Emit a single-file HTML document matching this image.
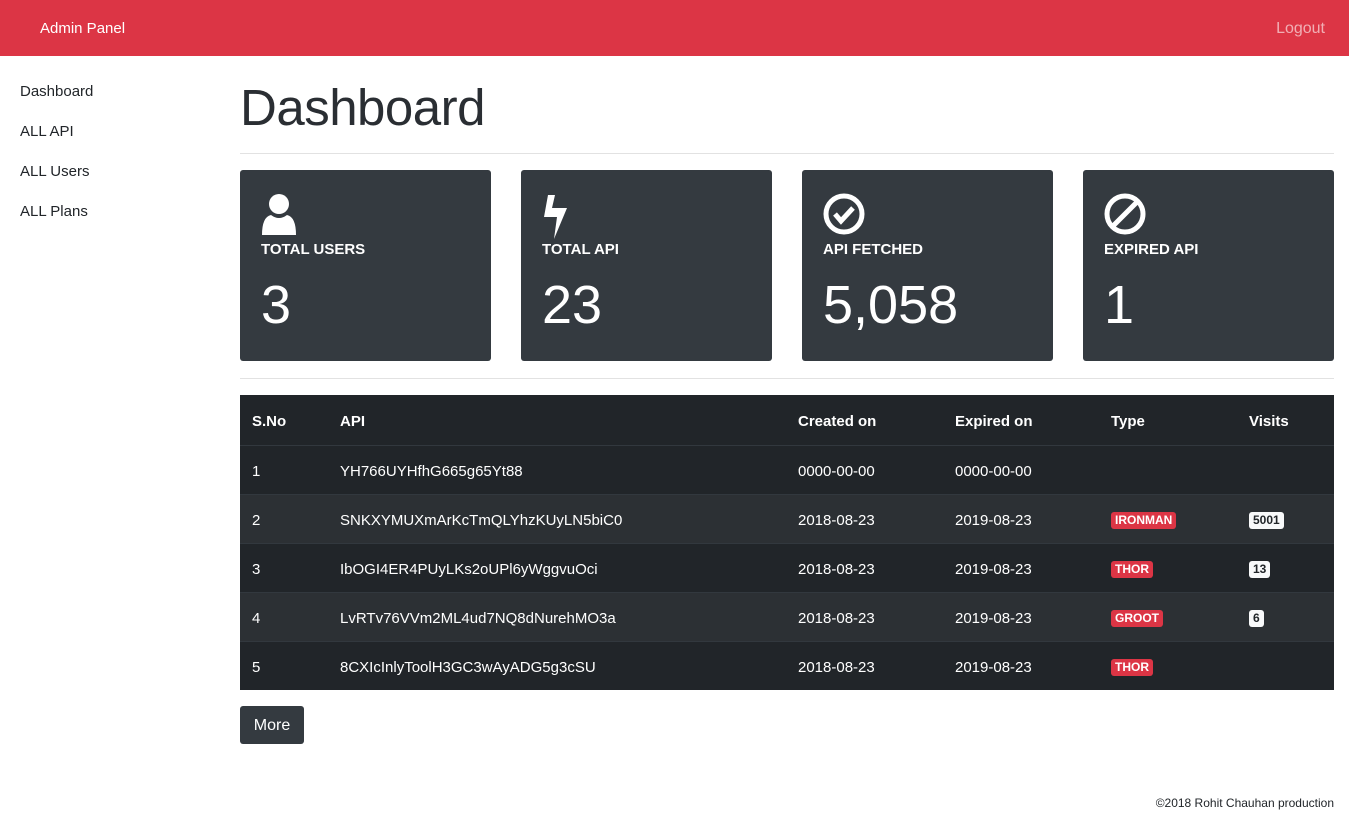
<!DOCTYPE html>
<html><head><meta charset="utf-8"><style>
*{box-sizing:border-box;margin:0;padding:0}
body{width:1349px;height:827px;font-family:"Liberation Sans",sans-serif;color:#212529;background:#fff;position:relative;overflow:hidden;font-size:16px}
.nav{height:56px;background:#dc3545;position:relative}
.nav .b{position:absolute;left:40px;top:20px;color:#fff;font-size:15px}
.nav .l{position:absolute;right:24px;top:20px;color:rgba(255,255,255,.6);font-size:16px}
.side a{position:absolute;left:20px;color:#212529;font-size:15px}
h1{position:absolute;left:240px;top:78px;font-size:51px;font-weight:normal;color:#2a2e33;letter-spacing:-0.5px}
.hr{position:absolute;left:240px;width:1094px;height:1px;background:#e2e2e2}
.card{position:absolute;top:170px;width:251px;height:191px;background:#343a40;border-radius:3px;color:#fff}
.card svg{position:absolute;left:21px;top:23px}
.card .tt{position:absolute;left:21px;top:71px;font-weight:bold;font-size:15px}
.card .n{position:absolute;left:21px;top:104px;font-size:54px;font-weight:normal}
table{position:absolute;left:240px;top:395px;width:1094px;border-collapse:collapse;background:#212529;color:#fff;font-size:15px}
td,th{height:49px;text-align:left;padding:3px 12px 0;border-top:1px solid #32383e}
th{height:50px;font-weight:bold;border-top:none;border-bottom:1px solid #32383e}
tr:nth-child(odd) td{background:#2c3034}
.bd{display:inline-block;font-size:12px;font-weight:bold;padding:2px 4px;border-radius:3px;background:#dc3545;color:#fff;line-height:13px}
.bl{background:#f8f9fa;color:#212529}
.more{position:absolute;left:240px;top:706px;width:64px;height:38px;background:#343a40;color:#fff;border-radius:3px;font-size:16px;text-align:center;line-height:40px}
.ft{position:absolute;right:15px;top:796px;font-size:12px;color:#212529}
</style></head><body>
<div class="nav"><span class="b">Admin Panel</span><span class="l">Logout</span></div>
<div class="side"><a style="top:83px">Dashboard</a><a style="top:123px">ALL API</a><a style="top:163px">ALL Users</a><a style="top:203px">ALL Plans</a></div>
<h1>Dashboard</h1>
<div class="hr" style="top:153px"></div>
<div class="card" style="left:240px"><svg width="36" height="44" viewBox="0 0 36 44"><circle cx="18" cy="11" r="10" fill="#fff"/><path d="M1 42 Q1 24 10 22 Q18 28 26 22 Q35 24 35 42 Z" fill="#fff"/></svg><div class="tt">TOTAL USERS</div><div class="n">3</div></div>
<div class="card" style="left:521px"><svg width="30" height="46" viewBox="0 0 30 46"><path d="M6 2 L13 2 L10 15 L25 15 L12 46 L15 24 L2 24 Z" fill="#fff"/></svg><div class="tt">TOTAL API</div><div class="n">23</div></div>
<div class="card" style="left:802px"><svg width="42" height="42" viewBox="0 0 42 42"><circle cx="21" cy="21" r="18" fill="none" stroke="#fff" stroke-width="5"/><path d="M12 21 L18 28 L30 15" fill="none" stroke="#fff" stroke-width="5"/></svg><div class="tt">API FETCHED</div><div class="n">5,058</div></div>
<div class="card" style="left:1083px"><svg width="42" height="42" viewBox="0 0 42 42"><circle cx="21" cy="21" r="18" fill="none" stroke="#fff" stroke-width="5"/><path d="M9 33 L33 9" stroke="#fff" stroke-width="5"/></svg><div class="tt">EXPIRED API</div><div class="n">1</div></div>
<div class="hr" style="top:378px"></div>
<table>
<colgroup><col style="width:88px"><col style="width:458px"><col style="width:157px"><col style="width:156px"><col style="width:138px"><col></colgroup>
<tr><th>S.No</th><th>API</th><th>Created on</th><th>Expired on</th><th>Type</th><th>Visits</th></tr>
<tr><td>1</td><td>YH766UYHfhG665g65Yt88</td><td>0000-00-00</td><td>0000-00-00</td><td></td><td></td></tr>
<tr><td>2</td><td>SNKXYMUXmArKcTmQLYhzKUyLN5biC0</td><td>2018-08-23</td><td>2019-08-23</td><td><span class="bd">IRONMAN</span></td><td><span class="bd bl">5001</span></td></tr>
<tr><td>3</td><td>IbOGI4ER4PUyLKs2oUPl6yWggvuOci</td><td>2018-08-23</td><td>2019-08-23</td><td><span class="bd">THOR</span></td><td><span class="bd bl">13</span></td></tr>
<tr><td>4</td><td>LvRTv76VVm2ML4ud7NQ8dNurehMO3a</td><td>2018-08-23</td><td>2019-08-23</td><td><span class="bd">GROOT</span></td><td><span class="bd bl">6</span></td></tr>
<tr><td>5</td><td>8CXIcInlyToolH3GC3wAyADG5g3cSU</td><td>2018-08-23</td><td>2019-08-23</td><td><span class="bd">THOR</span></td><td></td></tr>
</table>
<div class="more">More</div>
<div class="ft">©2018 Rohit Chauhan production</div>
</body></html>
